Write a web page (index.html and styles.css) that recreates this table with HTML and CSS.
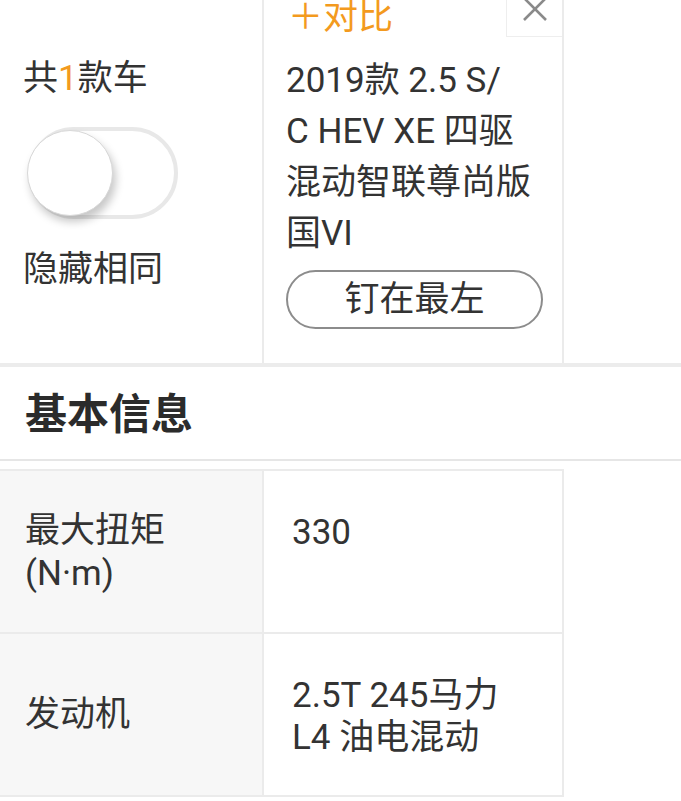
FILE: index.html
```html
<!DOCTYPE html>
<html lang="zh">
<head>
<meta charset="utf-8">
<link rel="stylesheet" href="styles.css">
</head>
<body>
<div class="page">
  <div class="top">
    <div class="side">
      <div class="count">共<span class="hl">1</span>款车</div>
      <div class="toggle"><div class="knob"></div></div>
      <div class="hide">隐藏相同</div>
    </div>
    <div class="car">
      <div class="add">＋对比</div>
      <div class="close"><svg width="26" height="26" viewBox="0 0 26 26"><path d="M2 2 L24 24 M24 2 L2 24" stroke="#8a8a8a" stroke-width="2.6" fill="none"/></svg></div>
      <div class="name">2019款 2.5 S/<br>C HEV XE 四驱<br>混动智联尊尚版<br>国VI</div>
      <div class="pin">钉在最左</div>
    </div>
    <div class="rest"></div>
  </div>
  <div class="section">基本信息</div>
  <div class="table">
    <div class="row">
      <div class="label">最大扭矩<br>(N·m)</div>
      <div class="value">330</div>
    </div>
    <div class="row">
      <div class="label">发动机</div>
      <div class="value">2.5T 245马力<br>L4 油电混动</div>
    </div>
  </div>
</div>
</body>
</html>
```
FILE: styles.css
```css
* { box-sizing: border-box; }
html, body { margin: 0; padding: 0; background: #fff; overflow: hidden; }
body {
  font-family: Roboto, "Noto Sans CJK SC", sans-serif;
  color: #333;
  font-size: 35px;
}
.page { margin-top: -19px; }
.top {
  display: flex;
  height: 386px;
  border-bottom: 4px solid #ececec;
}
.side {
  width: 264px;
  border-right: 2px solid #ebebeb;
  padding-left: 23px;
  display: flex;
  flex-direction: column;
}
.count { line-height: 50px; margin-top: 73px; }
.hl { color: #f39a1e; }
.toggle {
  width: 150px;
  height: 92px;
  margin-top: 23px;
  margin-left: 5px;
  border: 4px solid #e8e8e8;
  border-radius: 46px;
  display: flex;
  align-items: center;
}
.knob {
  width: 86px;
  height: 86px;
  border-radius: 50%;
  background: #fff;
  margin-left: -5px;
  border: 1px solid #d8d8d8;
  box-shadow: 3px 6px 8px rgba(0,0,0,0.22);
}
.hide { line-height: 50px; margin-top: 26px; }
.car {
  position: relative;
  width: 300px;
  border-right: 2px solid #ebebeb;
  padding-left: 22px;
}
.add {
  color: #f39a1e;
  line-height: 51px;
  margin-left: 2px;
  margin-top: 7px;
  font-family: "Noto Sans CJK SC", sans-serif;
}
.close {
  position: absolute;
  right: 0;
  top: 0;
  width: 56px;
  height: 56px;
  border-left: 1px solid #eee;
  border-bottom: 1px solid #eee;
  display: flex;
  align-items: center;
  justify-content: center;
}
.name { line-height: 51px; margin-top: 16px; }
.pin {
  width: 257px;
  height: 59px;
  margin-top: 11px;
  border: 2px solid #8c8c8c;
  border-radius: 30px;
  display: flex;
  align-items: center;
  justify-content: center;
  line-height: 1;
}
.rest { flex: 1; }
.section {
  height: 94px;
  border-bottom: 2px solid #e6e6e6;
  font-size: 42px;
  font-weight: bold;
  padding-left: 25px;
  padding-bottom: 6px;
  display: flex;
  align-items: center;
  color: #2b2b2b;
}
.table {
  width: 564px;
  margin-top: 8px;
  border-top: 2px solid #ebebeb;
}
.row {
  display: flex;
  height: 163px;
  border-bottom: 2px solid #ebebeb;
}
.label {
  width: 264px;
  background: #f7f7f7;
  border-right: 2px solid #ebebeb;
  padding-left: 25px;
  line-height: 43px;
  display: flex;
  align-items: center;
}
.value {
  width: 300px;
  border-right: 2px solid #ebebeb;
  padding-left: 28px;
  padding-top: 41px;
  line-height: 42px;
}
```
